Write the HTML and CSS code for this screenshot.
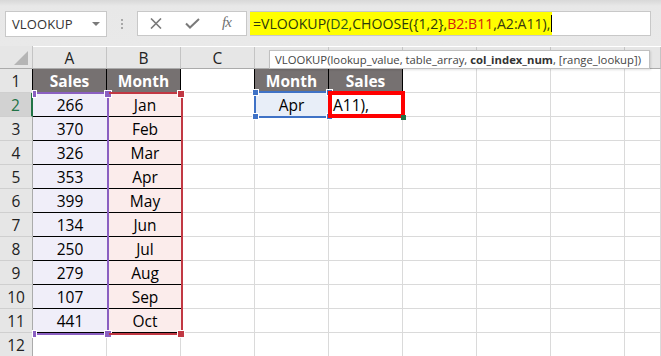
FILE: index.html
```html
<!DOCTYPE html>
<html>
<head>
<meta charset="utf-8">
<link rel="stylesheet" href="styles.css">
</head>
<body>
<div class="app">
  <div class="toolbar">
    <div class="namebox"><span class="name">VLOOKUP</span><span class="caret"></span></div>
    <div class="grip"><i></i><i></i><i></i></div>
    <div class="fbtns">
      <svg class="ico" width="12" height="11" viewBox="0 0 12 11"><path d="M1 0.5 L11 10.5 M11 0.5 L1 10.5" stroke="#7a7a7a" stroke-width="1.6" fill="none"/></svg>
      <svg class="ico" width="15" height="11" viewBox="0 0 15 11"><path d="M1 5.5 L5 9.5 L14 1" stroke="#7a7a7a" stroke-width="2" fill="none"/></svg>
      <span class="fx">fx</span>
    </div>
    <div class="finput"><span class="hl"><span class="t-k">=VLOOKUP(</span><span class="t-d">D2</span><span class="t-k">,CHOOSE(</span><span class="t-k">{1,2}</span><span class="t-k">,</span><span class="t-b">B2:B11</span><span class="t-k">,</span><span class="t-a">A2:A11</span><span class="t-k">),</span><span class="cursor"></span></span></div>
  </div>

  <div class="sheet">
    <div class="corner"><span class="tri"></span></div>
    <div class="ch">A</div><div class="ch">B</div><div class="ch">C</div><div class="ch"></div><div class="ch"></div><div class="ch"></div><div class="ch"></div><div class="ch"></div><div class="ch"></div>

    <div class="rh">1</div><div class="c th">Sales</div><div class="c th">Month</div><div class="c"></div><div class="c th">Month</div><div class="c th">Sales</div><div class="c"></div><div class="c"></div><div class="c"></div><div class="c"></div>

    <div class="rh on">2</div><div class="c sa">266</div><div class="c mo">Jan</div><div class="c"></div><div class="c d2">Apr</div><div class="c e2">A11),</div><div class="c"></div><div class="c"></div><div class="c"></div><div class="c"></div>

    <div class="rh">3</div><div class="c sa">370</div><div class="c mo">Feb</div><div class="c"></div><div class="c"></div><div class="c"></div><div class="c"></div><div class="c"></div><div class="c"></div><div class="c"></div>
    <div class="rh">4</div><div class="c sa">326</div><div class="c mo">Mar</div><div class="c"></div><div class="c"></div><div class="c"></div><div class="c"></div><div class="c"></div><div class="c"></div><div class="c"></div>
    <div class="rh">5</div><div class="c sa">353</div><div class="c mo">Apr</div><div class="c"></div><div class="c"></div><div class="c"></div><div class="c"></div><div class="c"></div><div class="c"></div><div class="c"></div>
    <div class="rh">6</div><div class="c sa">399</div><div class="c mo">May</div><div class="c"></div><div class="c"></div><div class="c"></div><div class="c"></div><div class="c"></div><div class="c"></div><div class="c"></div>
    <div class="rh">7</div><div class="c sa">134</div><div class="c mo">Jun</div><div class="c"></div><div class="c"></div><div class="c"></div><div class="c"></div><div class="c"></div><div class="c"></div><div class="c"></div>
    <div class="rh">8</div><div class="c sa">250</div><div class="c mo">Jul</div><div class="c"></div><div class="c"></div><div class="c"></div><div class="c"></div><div class="c"></div><div class="c"></div><div class="c"></div>
    <div class="rh">9</div><div class="c sa">279</div><div class="c mo">Aug</div><div class="c"></div><div class="c"></div><div class="c"></div><div class="c"></div><div class="c"></div><div class="c"></div><div class="c"></div>
    <div class="rh">10</div><div class="c sa">107</div><div class="c mo">Sep</div><div class="c"></div><div class="c"></div><div class="c"></div><div class="c"></div><div class="c"></div><div class="c"></div><div class="c"></div>
    <div class="rh">11</div><div class="c sa">441</div><div class="c mo">Oct</div><div class="c"></div><div class="c"></div><div class="c"></div><div class="c"></div><div class="c"></div><div class="c"></div><div class="c"></div>
    <div class="rh">12</div><div class="c"></div><div class="c"></div><div class="c"></div><div class="c"></div><div class="c"></div><div class="c"></div><div class="c"></div><div class="c"></div><div class="c"></div>

    <div class="tip">VLOOKUP(lookup_value, table_array, <b>col_index_num</b>, [range_lookup])</div>

    <div class="box box-a"><i class="sq sq-tl"></i><i class="sq sq-tr"></i><i class="sq sq-bl"></i><i class="sq sq-br"></i></div>
    <div class="box box-b"><i class="sq sq-tr"></i><i class="sq sq-br"></i></div>
    <div class="box box-d"><i class="sq sq-tl"></i><i class="sq sq-tr"></i><i class="sq sq-bl"></i><i class="sq sq-br"></i></div>
    <div class="box box-e"><i class="fill"></i></div>
  </div>
</div>
</body>
</html>
```

FILE: styles.css
```css
* { box-sizing: border-box; }
html, body { margin: 0; padding: 0; background: #fff; }
body { width: 661px; height: 356px; overflow: hidden; font-family: "Open Sans", "Noto Sans", sans-serif; }

.app { width: 661px; height: 356px; overflow: hidden; }

.toolbar {
  height: 46px;
  display: flex;
  align-items: flex-start;
  padding-top: 11px;
  background: linear-gradient(#d8d8d8 0px, #e8e8e8 6px, #e9e9e9 100%);
}

.namebox {
  margin-left: 5px;
  width: 102px;
  height: 26px;
  background: #fff;
  border: 1px solid #c8c8c8;
  display: flex;
  align-items: center;
  justify-content: space-between;
  padding: 0 6px 0 6px;
}
.name { font-size: 13px; color: #333; letter-spacing: 0.1px; }
.caret {
  width: 0; height: 0;
  border-left: 4px solid transparent;
  border-right: 4px solid transparent;
  border-top: 4px solid #7a7a7a;
}

.grip {
  width: 30px;
  height: 25px;
  display: flex;
  flex-direction: column;
  align-items: center;
  justify-content: center;
  gap: 2px;
}
.grip i { display: block; width: 2px; height: 2px; background: #a8a8a8; }

.fbtns {
  width: 110px;
  height: 25px;
  background: #fff;
  border: 1px solid #c8c8c8;
  display: flex;
  align-items: center;
  padding-left: 12px;
}
.fbtns .ico { display: block; }
.fbtns .ico:nth-child(2) { margin-left: 23px; }
.fx {
  margin-left: 22px;
  font-family: "Liberation Serif", "DejaVu Serif", serif;
  font-style: italic;
  font-size: 15px;
  color: #6f6f6f;
  letter-spacing: -1px;
  line-height: 1;
  margin-top: -2px;
}

.finput {
  margin-left: 3px;
  width: 401px;
  height: 25px;
  background: #fff;
  border: 1px solid #c8c8c8;
  border-left: none;
  display: flex;
}
.hl {
  background: #ffff00;
  height: 23px;
  display: flex;
  align-items: center;
  padding-left: 3px;
  font-size: 14.1px;
  white-space: pre;
}
.t-k { color: #2c3a0c; }
.t-d { color: #2c5a1c; }
.t-b { color: #d2230f; }
.t-a { color: #3a3a10; }
.cursor { display: inline-block; width: 1px; height: 17px; background: #000; margin-left: 1px; }

.sheet {
  position: relative;
  display: grid;
  grid-template-columns: 33px repeat(8, 74px) 36px;
  grid-template-rows: 23px repeat(12, 24px);
  font-size: 15.5px;
  color: #000;
}

.corner {
  background: #e6e6e6;
  border-right: 1px solid #c4c4c4;
  border-bottom: 1px solid #ababab;
  position: relative;
}
.tri {
  position: absolute;
  right: 4px; bottom: 3px;
  width: 0; height: 0;
  border-left: 14px solid transparent;
  border-bottom: 14px solid #b5b5b5;
}

.ch {
  background: #e6e6e6;
  border-right: 1px solid #c4c4c4;
  border-bottom: 1px solid #ababab;
  margin-top: 1px;
  display: flex;
  align-items: center;
  justify-content: center;
  color: #222;
  font-size: 15.5px;
}

.rh {
  background: #e6e6e6;
  border-right: 1px solid #ababab;
  border-bottom: 1px solid #cfcfcf;
  display: flex;
  align-items: center;
  justify-content: center;
  color: #222;
}
.rh.on { background: #d2d2d2; color: #217346; border-right: 2px solid #217346; }

.c {
  border-right: 1px solid #dadada;
  border-bottom: 1px solid #dadada;
  display: flex;
  align-items: center;
  justify-content: center;
  white-space: nowrap;
}
.c.th {
  background: #767171;
  color: #fff;
  font-weight: 700;
  border-right: 1px solid #000;
  border-left: 1px solid #000;
  margin-left: -1px;
  border-bottom: 1px solid #767171;
}
.c.sa { background: #f0eef9; border-bottom: 1px solid #000; border-right: none; }
.c.mo { background: #fbeceb; border-bottom: 1px solid #000; border-right: none; padding-left: 2px; }
.c.d2 { background: #e8eef8; }
.c.e2 { justify-content: flex-start; padding-left: 4px; background: #fff; }

.tip {
  position: absolute;
  left: 269px;
  top: 4px;
  width: 381px;
  height: 19px;
  background: #fff;
  border: 1px solid #c0c0c0;
  font-size: 11.3px;
  color: #444;
  line-height: 17px;
  padding-left: 5px;
  white-space: nowrap;
  box-shadow: 1px 1px 2px rgba(0,0,0,0.12);
}
.tip b { font-weight: 700; color: #333; }

.box { position: absolute; }
.box-a {
  left: 33px; top: 46px; width: 76px; height: 243px;
  border-top: 2px solid #8a5fc1;
  border-right: 2px solid #8a5fc1;
  border-bottom: 2px solid #8a5fc1;
}
.box-b {
  left: 109px; top: 46px; width: 74px; height: 243px;
  border-top: 2px solid #c13843;
  border-right: 2px solid #c13843;
  border-bottom: 2px solid #c13843;
}
.box-d {
  left: 254px; top: 45px; width: 76px; height: 27px;
  border: 2px solid #3f72c6;
  border-right: none;
}
.box-e {
  left: 328px; top: 45px; width: 77px; height: 27px;
  border: 4px solid #ff0000;
}
.sq {
  position: absolute;
  width: 6px; height: 6px;
  box-shadow: 0 0 0 1px #fff;
}
.box-a .sq { background: #8a5fc1; }
.box-b .sq { background: #c13843; }
.box-d .sq { background: #3f72c6; width: 5px; height: 5px; }
.box-a .sq-tl { left: 0; top: -3px; width: 3px; }
.box-a .sq-tr { right: -4px; top: -3px; }
.box-a .sq-bl { left: 0; bottom: -4px; width: 3px; }
.box-a .sq-br { right: -4px; bottom: -4px; }
.box-b .sq-tr { right: -3px; top: -3px; }
.box-b .sq-br { right: -3px; bottom: -4px; }
.box-d .sq-tl { left: -3px; top: -3px; }
.box-d .sq-tr { right: -2px; top: -3px; }
.box-d .sq-bl { left: -3px; bottom: -3px; }
.box-d .sq-br { right: -2px; bottom: -3px; }
.fill {
  position: absolute;
  right: -5px; bottom: -6px;
  width: 5px; height: 5px;
  background: #217346;
}
```
